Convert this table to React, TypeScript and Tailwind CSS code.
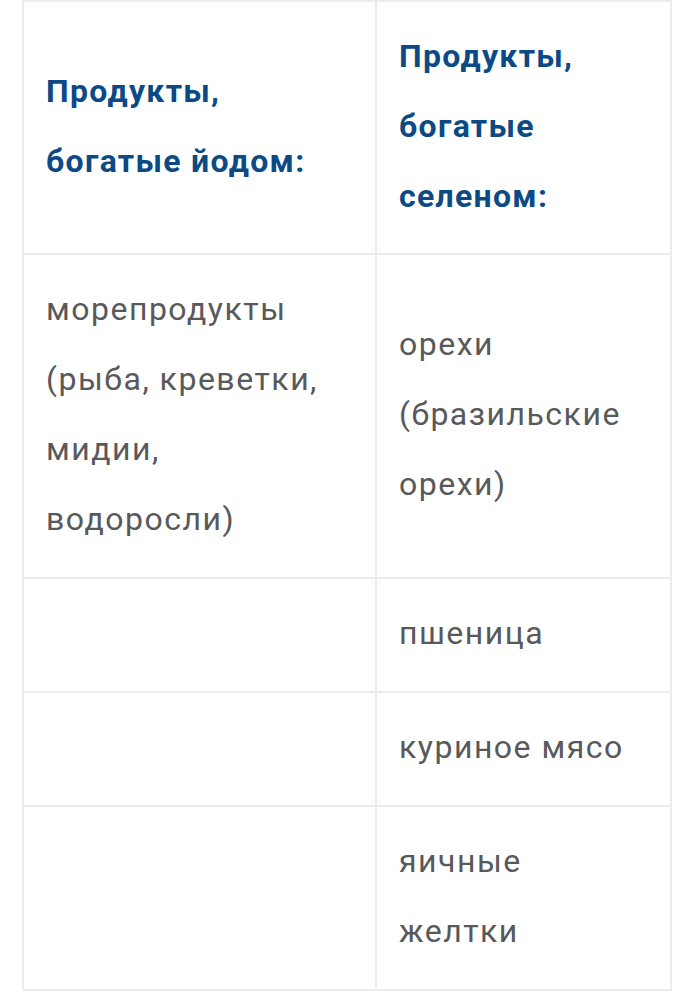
const rows: [string, string][] = [
  ["морепродукты (рыба, креветки, мидии, водоросли)", "орехи (бразильские орехи)"],
  ["", "пшеница"],
  ["", "куриное мясо"],
  ["", "яичные желтки"],
];

export default function App() {
  return (
    <div className="min-h-screen bg-white px-[22px] font-['Roboto',sans-serif]">
      <table className="w-[650px] table-fixed border-collapse">
        <thead>
          <tr>
            <th className="w-[353px] border-2 border-[#ececec] px-[22px] pt-[19px] pb-[22px] text-left align-middle text-[32px] font-bold leading-[70px] tracking-[1.3px] text-[#0c4a85]">
              Продукты, богатые йодом:
            </th>
            <th className="border-2 border-[#ececec] px-[22px] pt-[19px] pb-[22px] text-left align-middle text-[32px] font-bold leading-[70px] tracking-[1.3px] text-[#0c4a85]">
              Продукты, богатые селеном:
            </th>
          </tr>
        </thead>
        <tbody>
          {rows.map((row, index) => (
            <tr key={index}>
              {row.map((cell, i) => (
                <td
                  key={i}
                  className="border-2 border-[#ececec] px-[22px] pt-[19px] pb-[23px] align-middle text-[32px] leading-[70px] tracking-[1.5px] text-[#58595b]"
                >
                  {cell}
                </td>
              ))}
            </tr>
          ))}
        </tbody>
      </table>
    </div>
  );
}
